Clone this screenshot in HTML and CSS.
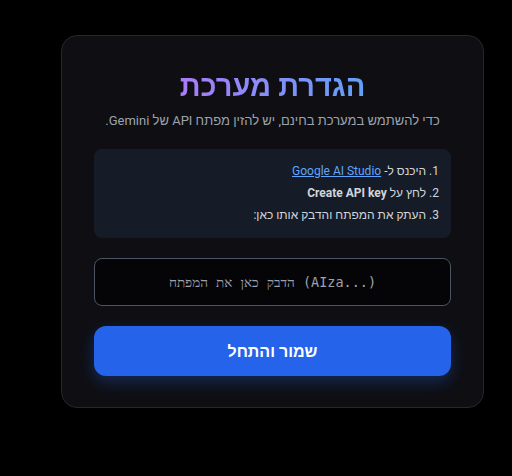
FILE: index.html
```html
<!DOCTYPE html>
<html lang="he" dir="rtl">

<head>
    <meta charset="UTF-8">
    <meta name="viewport" content="width=device-width, initial-scale=1.0">
    <title>הגדרת מערכת</title>
    <link rel="stylesheet" href="styles.css">
</head>

<body>
    <div class="card">
        <h1 class="title">הגדרת מערכת</h1>
        <p class="subtitle">כדי להשתמש במערכת בחינם, יש להזין מפתח API של Gemini.</p>
        <div class="steps">
            <p>1. היכנס ל- <a href="#">Google AI Studio</a></p>
            <p>2. לחץ על <b>Create API key</b></p>
            <p>3. העתק את המפתח והדבק אותו כאן:</p>
        </div>
        <input type="text" class="key-input" dir="ltr" placeholder="הדבק כאן את המפתח (AIza...)">
        <button class="save-btn">שמור והתחל</button>
    </div>
</body>
</html>
```

FILE: styles.css
```css
* {
    margin: 0;
    padding: 0;
    box-sizing: border-box;
}

body {
    background: #000;
    font-family: Roboto, "Noto Sans", "Liberation Sans", sans-serif;
    padding: 35px 28px 0 60px;
}

.card {
    width: 423px;
    height: 373px;
    background: #0f0f13;
    border: 1px solid #27272a;
    border-radius: 16px;
    padding: 31px 32px;
    display: flex;
    flex-direction: column;
}

.title {
    font-size: 29px;
    font-weight: 700;
    text-align: center;
    line-height: 38px;
    background: linear-gradient(to right, #a97cfa, #62a0f8);
    -webkit-background-clip: text;
    background-clip: text;
    color: transparent;
    width: max-content;
    align-self: center;
}

.subtitle {
    text-align: center;
    color: #9ca3af;
    font-size: 13px;
    line-height: 16px;
    margin-top: 8px;
    margin-bottom: 20px;
}

.steps {
    background: #161c27;
    border-radius: 8px;
    padding: 11px 12px 12px;
    margin-bottom: 20px;
}

.steps p {
    color: #d1d5db;
    font-size: 12px;
    line-height: 22px;
}

.steps a {
    color: #60a5fa;
}

.steps b {
    font-weight: 700;
}

.key-input {
    height: 48px;
    background: #050507;
    border: 1px solid #4b5563;
    border-radius: 8px;
    color: #e5e7eb;
    text-align: center;
    font-family: "DejaVu Sans Mono", monospace;
    font-size: 13.5px;
    margin-bottom: 20px;
}

.key-input::placeholder {
    color: #9ca3af;
}

.save-btn {
    height: 50px;
    border: 0;
    background: #2563eb;
    border-radius: 12px;
    color: #fff;
    font-family: inherit;
    font-size: 16px;
    font-weight: 700;
    box-shadow: 0 6px 16px rgba(37, 99, 235, 0.3);
    cursor: pointer;
}
```
